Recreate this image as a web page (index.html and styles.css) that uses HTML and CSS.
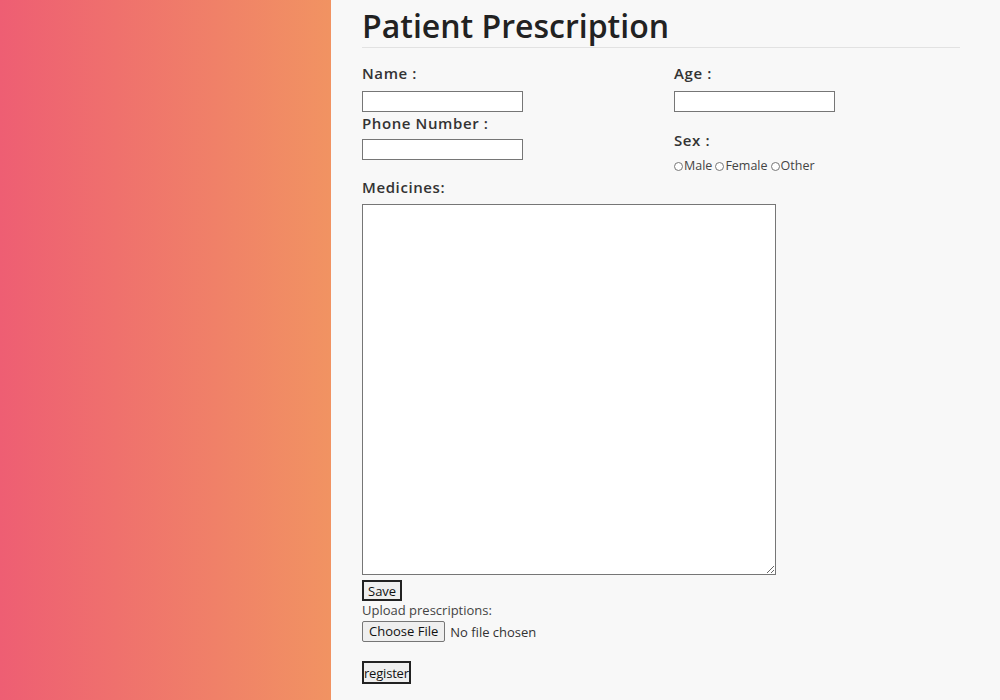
FILE: index.html
```html
<!DOCTYPE html>
<html>
<head>
<meta charset="utf-8">
<link rel="stylesheet" href="styles.css">
<title>Patient Prescription</title>
</head>
<body>
<div class="page">
  <aside class="side"></aside>
  <main class="main">
    <h1 class="title">Patient Prescription</h1>
    <form class="form">
      <div class="cols">
        <div class="col">
          <label class="lbl">Name :</label>
          <input class="txt" type="text">
          <label class="lbl lbl-phone">Phone Number :</label>
          <input class="txt" type="text">
        </div>
        <div class="col">
          <label class="lbl">Age :</label>
          <input class="txt" type="text">
          <label class="lbl lbl-sex">Sex :</label>
          <div class="radios">
            <span class="ropt"><span class="rdot"></span>Male</span>
            <span class="ropt"><span class="rdot"></span>Female</span>
            <span class="ropt"><span class="rdot"></span>Other</span>
          </div>
        </div>
      </div>
      <label class="lbl lbl-med">Medicines:</label>
      <textarea class="area"></textarea>
      <button type="button" class="btn btn-save">Save</button>
      <div class="upl">Upload prescriptions:</div>
      <div class="file"><span class="filebtn">Choose File</span><span class="nofile">No file chosen</span></div>
      <button type="button" class="btn btn-reg">register</button>
    </form>
  </main>
</div>
</body>
</html>
```
FILE: styles.css
```css
* { box-sizing: border-box; }
html, body { margin: 0; padding: 0; }
body {
  background: #f8f8f8;
  font-family: "Open Sans", "Noto Sans", sans-serif;
  color: #222;
}
.page {
  display: grid;
  grid-template-columns: 331px 1fr;
  height: 700px;
}
.side {
  background: linear-gradient(90deg, #ee5e73 0%, #f19362 100%);
}
.main {
  padding: 0 40px 0 31px;
}
.title {
  margin: 0;
  padding-top: 6px;
  font-size: 32px;
  font-weight: 600;
  line-height: 40px;
  color: #222;
  border-bottom: 1px solid #e2e2e2;
  padding-bottom: 0;
  height: 48px;
}
.form { display: flex; flex-direction: column; align-items: flex-start; }
.cols {
  display: grid;
  grid-template-columns: 312px 1fr;
  width: 100%;
}
.col { display: flex; flex-direction: column; align-items: flex-start; }
.lbl {
  font-size: 15px;
  font-weight: 600;
  letter-spacing: 0.6px;
  color: #333;
  line-height: 20px;
  margin-top: 15px;
  margin-bottom: 8px;
}
.lbl-phone { margin-top: 1px; margin-bottom: 6px; }
.lbl-sex { margin-top: 18px; margin-bottom: 8px; }
.lbl-med { margin-top: 3px; margin-bottom: 7px; }
.txt {
  width: 161px;
  height: 21px;
  border: 1px solid #767676;
  border-radius: 0;
  background: #fff;
  padding: 0;
  margin: 0;
}
.radios {
  display: flex;
  font-size: 12.5px;
  color: #444;
  line-height: 16px;
  gap: 3px;
}
.ropt { display: inline-flex; align-items: center; }
.rdot {
  width: 9px; height: 9px;
  border: 1px solid #777;
  border-radius: 50%;
  background: #fff;
  margin-right: 1px;
}
.area {
  width: 414px;
  height: 371px;
  border: 1px solid #767676;
  border-radius: 0;
  background: #fff;
  margin: 0;
  resize: both;
}
.btn {
  font-family: "Open Sans", sans-serif;
  font-size: 13px;
  color: #111;
  background: #efefef;
  border: 2px solid #222;
  border-radius: 0;
  padding: 0 4px;
  margin: 0;
  line-height: 16px;
}
.btn-save { margin-top: 5px; height: 21px; }
.upl { font-size: 13px; color: #444; line-height: 18px; margin-top: 0; }
.file { display: flex; align-items: center; margin-top: 2px; font-size: 13px; color: #333; }
.filebtn {
  display: inline-block;
  height: 21px;
  line-height: 19px;
  padding: 0 6px;
  background: #efefef;
  border: 1px solid #767676;
  border-radius: 2px;
  color: #111;
}
.nofile { margin-left: 5px; }
.btn-reg { margin-top: 19px; height: 23px; padding: 0; letter-spacing: -0.2px; }
```
